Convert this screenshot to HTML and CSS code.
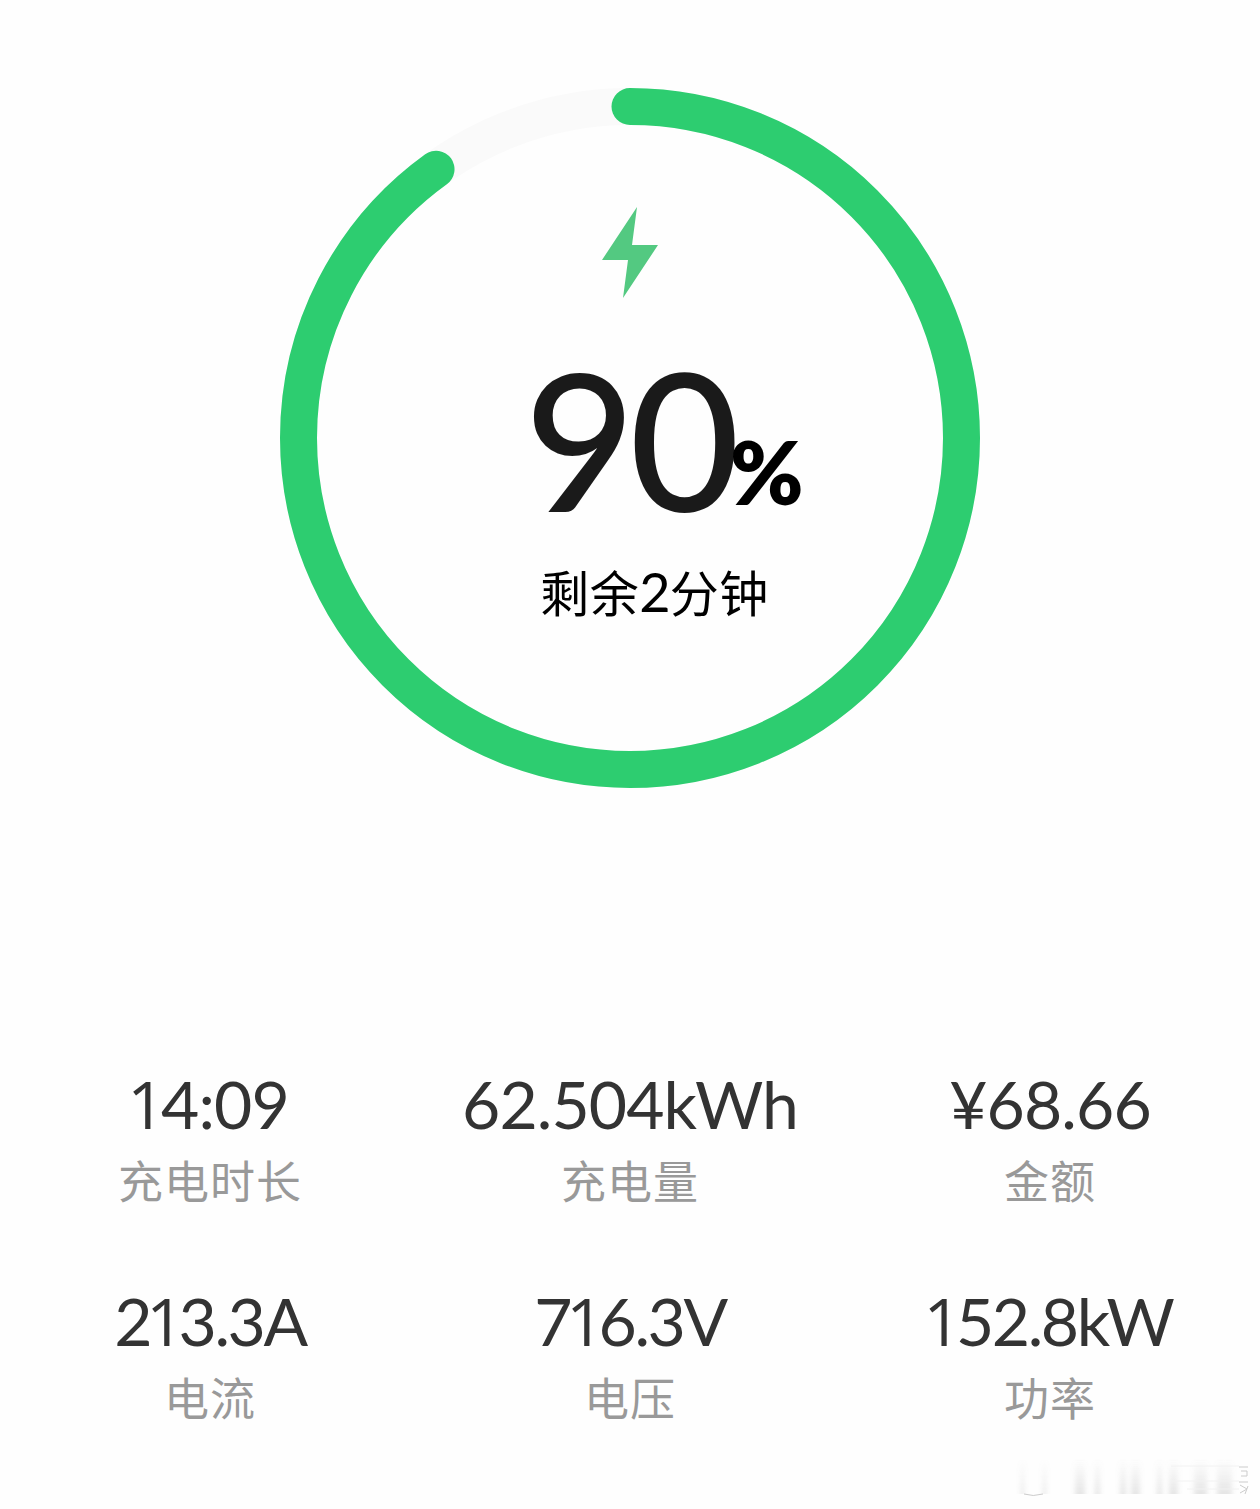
FILE: index.html
```html
<!DOCTYPE html>
<html lang="zh-CN">
  <head>
    <meta charset="utf-8">
    <title>充电中</title>
    <link rel="stylesheet" href="styles.css">
  </head>
  <body>
    <div class="gauge">
      <svg class="ring" viewBox="0 0 700 700">
        <circle class="ring-track" cx="350" cy="350" r="331.5"/>
        <circle class="ring-value" cx="350" cy="350" r="331.5" pathLength="100" stroke-dasharray="90.05 100" transform="rotate(-90 350 350)"/>
      </svg>
      <div class="gauge-info">
        <svg class="bolt" viewBox="0 0 56 91">
          <path d="M35 0 L30 38 H56 L21 91 L26 53 H0 Z"/>
        </svg>
        <div class="percent"><span class="percent-number">90</span><span class="percent-sign">%</span></div>
        <div class="remain">剩余<span class="remain-number">2</span>分钟</div>
      </div>
    </div>

    <div class="stats">
      <div class="stat">
        <div class="stat-value"><span class="one">1</span>4:09</div>
        <div class="stat-label">充电时长</div>
      </div>
      <div class="stat">
        <div class="stat-value">62.504kWh</div>
        <div class="stat-label">充电量</div>
      </div>
      <div class="stat">
        <div class="stat-value">¥68.66</div>
        <div class="stat-label">金额</div>
      </div>
      <div class="stat">
        <div class="stat-value tight">2<span class="one">1</span>3.3A</div>
        <div class="stat-label">电流</div>
      </div>
      <div class="stat">
        <div class="stat-value tight">7<span class="one">1</span>6.3V</div>
        <div class="stat-label">电压</div>
      </div>
      <div class="stat">
        <div class="stat-value tight"><span class="one">1</span>52.8kW</div>
        <div class="stat-label">功率</div>
      </div>
    </div>

    <svg class="smudge" viewBox="0 0 240 44">
      <defs>
        <linearGradient id="fade" x1="0" y1="0" x2="0" y2="1">
          <stop offset="0" stop-color="#999" stop-opacity="0"/>
          <stop offset="1" stop-color="#999" stop-opacity="0.24"/>
        </linearGradient>
        <filter id="soft" x="-10%" y="-10%" width="120%" height="120%">
          <feGaussianBlur stdDeviation="2.4 0.4"/>
        </filter>
      </defs>
      <g fill="url(#fade)" filter="url(#soft)">
        <rect x="10" y="2" width="3" height="35"/>
        <rect x="32" y="2" width="3" height="35"/>
        <rect x="64" y="2" width="10" height="35"/>
        <rect x="84" y="2" width="5" height="35"/>
        <rect x="109" y="2" width="6" height="35"/>
        <rect x="120" y="2" width="9" height="35"/>
        <rect x="146" y="2" width="5" height="35"/>
        <rect x="158" y="2" width="9" height="35"/>
        <rect x="183" y="2" width="13" height="35"/>
        <rect x="206" y="2" width="15" height="35"/>
      </g>
      <path class="smudge-line" d="M13 37 Q22 40 32 37"/>
      <path class="smudge-line faint" d="M160 9 H228 M160 24 H228 M176 32 H228"/>
      <path class="smudge-line" d="M228 10 H237 M230 14 H236 V19 H230 M228 25 H237 M229 28 L236 32 L229 36 M237 29 L234 37"/>
    </svg>
  </body>
</html>
```

FILE: styles.css
```css
* {
  box-sizing: border-box;
}
body {
  margin: 0;
  height: 1509px;
  padding-top: 88px;
  position: relative;
  overflow: hidden;
  background-color: #fefefe;
  font-family: Lato, "Noto Sans CJK SC", sans-serif;
}
.gauge {
  display: grid;
  width: 700px;
  height: 700px;
  margin: 0 auto;
}
.ring, .gauge-info {
  grid-area: 1 / 1;
}
.ring {
  width: 700px;
  height: 700px;
}
.ring circle {
  fill: none;
  stroke-width: 37;
}
.ring .ring-track {
  stroke: #fafafa;
}
.ring .ring-value {
  stroke: #2dcd70;
  stroke-linecap: round;
}
.gauge-info {
  display: flex;
  flex-direction: column;
  align-items: center;
  padding-top: 119px;
}
.bolt {
  width: 56px;
  height: 91px;
  fill: #53c981;
}
.percent {
  display: flex;
  align-items: flex-start;
  height: 190px;
  margin-top: 45px;
  padding-left: 68px;
  line-height: 190px;
}
.percent-number {
  font-size: 191px;
  font-weight: 500;
  letter-spacing: -6px;
  color: #1a1a1a;
}
.percent-sign {
  margin: 33px 0 0 -4px;
  font-size: 88px;
  font-weight: 800;
  color: #000;
}
.remain {
  height: 60px;
  margin-top: 29px;
  padding-left: 49px;
  line-height: 60px;
  font-size: 49px;
  letter-spacing: 0.6px;
  color: #000;
}
.remain-number {
  font-size: 54px;
  letter-spacing: -1px;
}
.stats {
  display: grid;
  grid-template-columns: repeat(3, 420px);
  row-gap: 77px;
  margin-top: 276px;
}
.stat {
  height: 140px;
  text-align: center;
}
.stat-value {
  height: 80px;
  line-height: 80px;
  font-size: 66px;
  letter-spacing: -0.9px;
  color: #333;
}
.stat-value.tight {
  letter-spacing: -2.4px;
}
/* plain 1 without the foot */
.one {
  margin: 0 -3px 0 -4px;
  font-family: "Open Sans", sans-serif;
  line-height: 1;
}
.stat-label {
  height: 60px;
  margin-top: 8px;
  line-height: 60px;
  font-size: 45px;
  letter-spacing: 1px;
  color: #999;
}
.smudge {
  position: absolute;
  right: 9px;
  bottom: 8px;
  width: 240px;
  height: 44px;
}
.smudge-line {
  fill: none;
  stroke: #ccc;
  stroke-width: 1;
}
.smudge-line.faint {
  stroke: #f2f2f2;
}
```
